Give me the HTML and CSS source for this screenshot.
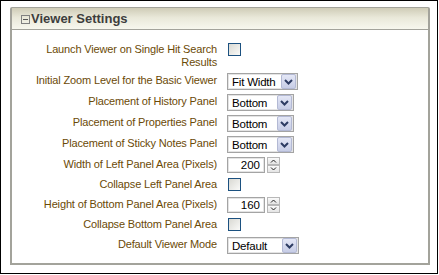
FILE: index.html
```html
<!DOCTYPE html>
<html lang="en">
<head>
    <meta charset="UTF-8">
    <title>Viewer Settings</title>
    <link rel="stylesheet" href="styles.css">
</head>
<body>
    <div class="frame">
        <div class="panel">
            <!-- Header with collapse toggle -->
            <div class="panel-header">
                <span class="toggle"></span>
                <span class="title">Viewer Settings</span>
            </div>

            <div class="panel-body">
                <div class="field">
                    <label class="label">Launch Viewer on Single Hit Search Results</label>
                    <span class="check"></span>
                </div>

                <div class="field">
                    <label class="label">Initial Zoom Level for the Basic Viewer</label>
                    <div class="select w71"><span class="value">Fit Width</span><span class="drop"><svg width="9" height="6" viewBox="0 0 9 6"><polyline points="1,1 4.5,4.5 8,1" fill="none" stroke="#2d3c63" stroke-width="2"/></svg></span></div>
                </div>

                <div class="field">
                    <label class="label">Placement of History Panel</label>
                    <div class="select w67"><span class="value">Bottom</span><span class="drop"><svg width="9" height="6" viewBox="0 0 9 6"><polyline points="1,1 4.5,4.5 8,1" fill="none" stroke="#2d3c63" stroke-width="2"/></svg></span></div>
                </div>

                <div class="field">
                    <label class="label">Placement of Properties Panel</label>
                    <div class="select w67"><span class="value">Bottom</span><span class="drop"><svg width="9" height="6" viewBox="0 0 9 6"><polyline points="1,1 4.5,4.5 8,1" fill="none" stroke="#2d3c63" stroke-width="2"/></svg></span></div>
                </div>

                <div class="field">
                    <label class="label">Placement of Sticky Notes Panel</label>
                    <div class="select w67"><span class="value">Bottom</span><span class="drop"><svg width="9" height="6" viewBox="0 0 9 6"><polyline points="1,1 4.5,4.5 8,1" fill="none" stroke="#2d3c63" stroke-width="2"/></svg></span></div>
                </div>

                <div class="field">
                    <label class="label">Width of Left Panel Area (Pixels)</label>
                    <div class="spin">
                        <span class="number">200</span>
                        <span class="arrows">
                            <span class="arrow"><svg width="7" height="4" viewBox="0 0 7 4"><polyline points="1,3.5 3.5,1 6,3.5" fill="none" stroke="#222" stroke-width="1"/></svg></span>
                            <span class="arrow"><svg width="7" height="4" viewBox="0 0 7 4"><polyline points="1,0.5 3.5,3 6,0.5" fill="none" stroke="#222" stroke-width="1"/></svg></span>
                        </span>
                    </div>
                </div>

                <div class="field">
                    <label class="label">Collapse Left Panel Area</label>
                    <span class="check"></span>
                </div>

                <div class="field">
                    <label class="label">Height of Bottom Panel Area (Pixels)</label>
                    <div class="spin">
                        <span class="number">160</span>
                        <span class="arrows">
                            <span class="arrow"><svg width="7" height="4" viewBox="0 0 7 4"><polyline points="1,3.5 3.5,1 6,3.5" fill="none" stroke="#222" stroke-width="1"/></svg></span>
                            <span class="arrow"><svg width="7" height="4" viewBox="0 0 7 4"><polyline points="1,0.5 3.5,3 6,0.5" fill="none" stroke="#222" stroke-width="1"/></svg></span>
                        </span>
                    </div>
                </div>

                <div class="field">
                    <label class="label">Collapse Bottom Panel Area</label>
                    <span class="check"></span>
                </div>

                <div class="field">
                    <label class="label">Default Viewer Mode</label>
                    <div class="select w72"><span class="value">Default</span><span class="drop"><svg width="9" height="6" viewBox="0 0 9 6"><polyline points="1,1 4.5,4.5 8,1" fill="none" stroke="#2d3c63" stroke-width="2"/></svg></span></div>
                </div>
            </div>
        </div>
    </div>
</body>
</html>
```

FILE: styles.css
```css
body {
    margin: 0;
    background: #fff;
    font-family: "Liberation Sans", Arial, sans-serif;
}

/* black frame round the whole shot */
.frame {
    width: 438px;
    height: 274px;
    box-sizing: border-box;
    border: 1px solid #000;
    padding: 6px 0 0 9px;
}

.panel {
    width: 420px;
    height: 258px;
    box-sizing: border-box;
    border: 2px solid #a3a39b;
    border-top-width: 1px;
    border-radius: 2px 2px 0 0;
}

.panel-header {
    height: 21px;
    border-bottom: 1px solid #a3a39b;
    background: linear-gradient(to bottom, #cfccb7, #e9e8d9 45%, #f7f7ee);
    display: flex;
    align-items: center;
    padding-left: 9px;
}

.toggle {
    width: 7px;
    height: 7px;
    border: 1px solid #808080;
    position: relative;
    margin-top: 1px;
}

.toggle::after {
    content: "";
    position: absolute;
    left: 1px;
    top: 3px;
    width: 5px;
    height: 1px;
    background: #555;
}

.title {
    font-size: 13px;
    font-weight: bold;
    color: #3d3d3d;
    margin-left: 1px;
}

.panel-body {
    padding: 12px 0 0 20px;
}

.field {
    display: flex;
    align-items: flex-start;
    gap: 10px;
    padding-bottom: 4px;
}

.label {
    width: 185px;
    flex: none;
    text-align: right;
    font-size: 11px;
    line-height: 13px;
    letter-spacing: -0.15px;
    color: #6b4a06;
    padding-top: 1px;
}

/* checkbox */
.check {
    width: 11px;
    height: 11px;
    border: 1px solid #1c5180;
    background: linear-gradient(135deg, #d9d9d3, #fafaf8);
    margin: 1px 0 2px 1px;
}

/* drop-down */
.select {
    height: 17px;
    box-sizing: border-box;
    border: 1px solid #a4a4a4;
    box-shadow: inset 0 0 0 1px #e4e4e4;
    display: flex;
    align-items: center;
    justify-content: space-between;
    background: #fff;
}

.w71 { width: 71px; }
.w67 { width: 67px; }
.w72 { width: 72px; }

.value {
    font-size: 11.5px;
    letter-spacing: -0.2px;
    color: #000;
    padding-left: 4px;
    padding-top: 1px;
}

.drop {
    width: 13px;
    height: 13px;
    margin-right: 1px;
    border: 1px solid #b3b9d4;
    border-radius: 2px;
    background: linear-gradient(to bottom, #e4e7f6, #c7cde6);
    display: flex;
    align-items: center;
    justify-content: center;
}

/* number spinner */
.spin {
    display: flex;
    gap: 2px;
}

.number {
    width: 38px;
    height: 16px;
    box-sizing: border-box;
    border: 1px solid #a4a4a4;
    box-shadow: inset 0 0 0 1px #e4e4e4;
    text-align: right;
    font-size: 11.5px;
    line-height: 14px;
    padding-right: 4px;
    color: #000;
}

.arrows {
    display: flex;
    flex-direction: column;
}

.arrow {
    width: 13px;
    height: 8px;
    box-sizing: border-box;
    border: 1px solid #b8b8b8;
    background: linear-gradient(to bottom, #fafafa, #e4e4e4);
    display: flex;
    align-items: center;
    justify-content: center;
}
```
